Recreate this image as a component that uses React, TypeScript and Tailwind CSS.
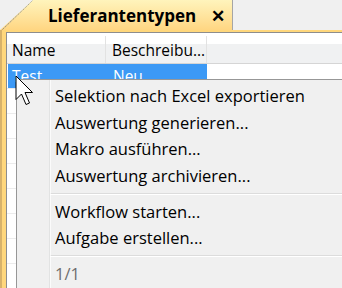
import React from 'react'

const rows = Array.from({ length: 9 })

const menuGroups = [
  ['Selektion nach Excel exportieren', 'Auswertung generieren...', 'Makro ausführen...', 'Auswertung archivieren...'],
  ['Workflow starten...', 'Aufgabe erstellen...'],
]

function Cursor() {
  return (
    <svg className="absolute left-[15px] top-[75px]" width="20" height="31" viewBox="0 0 20 31">
      <path
        d="M1 1 L1 24.5 L6.5 19 L11 29.5 L14.5 28 L10 17.5 L17.5 17.5 Z"
        fill="#fff"
        stroke="#000"
        strokeWidth="1"
        strokeLinejoin="miter"
      />
    </svg>
  )
}

export default function App() {
  return (
    <div className="relative h-[288px] w-[342px] overflow-hidden bg-[#f0f0f0] font-['Open_Sans',sans-serif] text-black">
      {/* tab strip */}
      <div className="flex h-[30px]">
        <div className="relative h-[30px] w-[233px] border-r border-[#a5a5a5] bg-gradient-to-b from-[#fff4bc] to-[#ffd682] [clip-path:polygon(33px_0,100%_0,100%_100%,0_100%,0_30px)]">
          <svg className="absolute left-0 top-0" width="34" height="31">
            <line x1="1.5" y1="30.5" x2="33" y2="0" stroke="#8a8a8a" strokeWidth="1" strokeDasharray="1.5 0.8" />
          </svg>
          <div className="flex h-full items-center pl-[48px] pt-[1px]">
            <span className="text-[17px] font-bold leading-none">Lieferantentypen</span>
            <span className="ml-[15px] text-[17px] font-bold leading-none">✕</span>
          </div>
        </div>
      </div>

      {/* yellow frame */}
      <div className="h-[258px] border-l-2 border-[#d8b26a] bg-[#ffd77c] pl-[4px] pt-[2px]">
        <div className="h-full border-l border-t border-[#8d8d8d] bg-white pt-[3px]">
          <div className="flex h-[28px] border-b border-[#d5d5d5] bg-gradient-to-b from-white from-30% to-[#f0f1f2] to-30% text-[15.5px]">
            <div className="flex w-[99px] items-center border-r border-[#e2e2e2] pl-[5px] pt-[2px]">Name</div>
            <div className="flex w-[101px] items-center border-r border-[#e2e2e2] pl-[6px] pt-[2px]">Beschreibu…</div>
          </div>
          {rows.map((_, i) => (
            <div key={i} className="flex h-[25px] border-b border-[#ececec] text-[15.5px]">
              {i === 0 ? (
                <div className="ml-[1px] flex w-[199px] bg-[#3c99f5] text-white">
                  <div className="w-[99px] pl-[4px] pt-[1px]">Test</div>
                  <div className="pl-[6px] pt-[1px]">Neu</div>
                </div>
              ) : null}
            </div>
          ))}
        </div>
      </div>

      {/* context menu */}
      <div className="absolute left-[16px] top-[79px] w-[340px] border border-[#979797] bg-[#f0f0f0] pb-[20px] pt-[3px]">
        <div className="absolute bottom-0 left-[32px] top-0 w-[2px] border-l border-[#e2e3e3] bg-white/70" />
        {menuGroups.map((group, gi) => (
          <div key={gi}>
            {group.map((label) => (
              <div key={label} className="flex h-[26.67px] items-center pl-[38px] text-[16.5px] leading-none">
                {label}
              </div>
            ))}
            <div className="ml-[33px] flex h-[9px] items-center">
              <div className="h-[2px] w-full border-t border-[#dcdcdc] bg-white" />
            </div>
          </div>
        ))}
        <div className="flex h-[26.67px] items-center pl-[38px] text-[16.5px] leading-none text-[#6d6d6d]">1/1</div>
      </div>

      <Cursor />
    </div>
  )
}
